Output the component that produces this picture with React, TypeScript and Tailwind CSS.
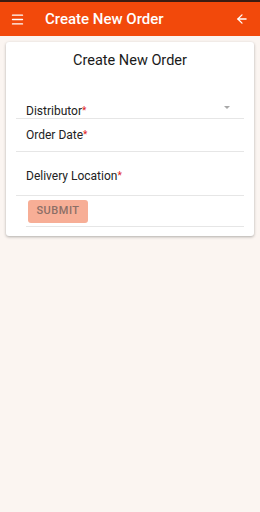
import { ArrowLeft, Menu } from "lucide-react";

function Req() {
  return <span className="align-[1px] text-[10px] text-[#e02020]">*</span>;
}

export default function App() {
  return (
    <div className="flex min-h-[512px] w-[260px] flex-col bg-[#fbf5f1] font-['Roboto',sans-serif]">
      <div className="h-[2px] bg-[#3a1c12]" />
      <header className="flex h-[34px] items-center bg-[#f2490b] pl-[10px] pr-[11px] text-white">
        <Menu size={15} strokeWidth={2.2} />
        <h1 className="ml-[20px] text-[15px] font-medium">Create New Order</h1>
        <ArrowLeft size={14} strokeWidth={2.2} className="ml-auto" />
      </header>
      <main className="mx-[6px] mt-[6px] flex flex-col rounded-[3px] bg-white pb-[9px] shadow-[0_1px_3px_rgba(0,0,0,0.3)]">
        <h2 className="h-[36px] pt-[9px] text-center text-[14.5px] leading-[20px] text-[#1a1a1a]">Create New Order</h2>
        <div className="mx-[10px] flex h-[41px] items-end justify-between border-b border-[#e6e6e6] pl-[10px] pr-[14px]">
          <span className="text-[12px] leading-[14px] text-[#222]">
            Distributor
            <Req />
          </span>
          <span className="mb-[9px] h-0 w-0 border-x-[3.5px] border-t-[3.5px] border-x-transparent border-t-[#a8a8a8]" />
        </div>
        <div className="mx-[10px] border-b border-[#e6e6e6] pb-[9px] pl-[10px] pt-[9px] text-[12px] leading-[14px] text-[#222]">
          Order Date
          <Req />
        </div>
        <div className="mx-[10px] border-b border-[#e6e6e6] pb-[12px] pl-[10px] pt-[17px] text-[12px] leading-[14px] text-[#222]">
          Delivery Location
          <Req />
        </div>
        <div className="ml-[20px] mr-[10px] flex border-b border-[#e6e6e6] pb-[3px] pt-[4px]">
          <button className="ml-[2px] h-[23px] w-[60px] rounded-[3px] bg-[#f7ae96] text-[11px] font-medium tracking-[0.5px] text-[#8c6f66]">
            SUBMIT
          </button>
        </div>
      </main>
    </div>
  );
}
